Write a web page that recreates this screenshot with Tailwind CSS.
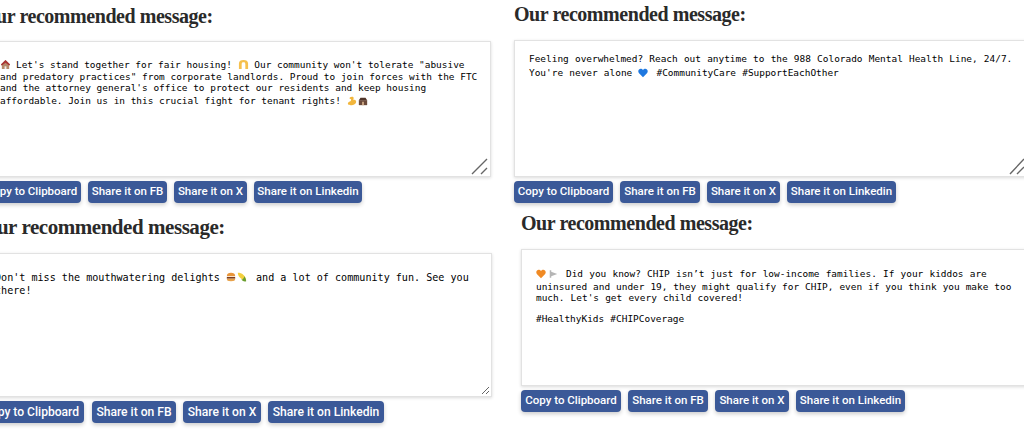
<!DOCTYPE html>
<html lang="en">
<head>
  <meta charset="UTF-8">
  <title>Recommended messages</title>
  <script src="https://cdn.jsdelivr.net/npm/@tailwindcss/browser@4"></script>
</head>
<body class="bg-white overflow-hidden">
  <div class="w-[1024px] h-[434px] overflow-hidden flex">

    <!-- left column -->
    <div class="w-[514px] shrink-0 flex flex-col">
      <section class="ml-[-19px] w-[510px] mt-[3px]">
        <h2 class="font-['Liberation_Serif'] font-bold text-[20px] tracking-[-0.45px] leading-[26px] text-[#2a2a2a]">Our recommended message:</h2>
        <div class="relative mt-[12px] h-[136px] bg-white border border-[#e2e2e2] shadow-[0_1px_3px_rgba(0,0,0,0.15)] pl-[18px] pt-[17px] font-['DejaVu_Sans_Mono'] text-[9.45px] text-black">
          <div class="h-[12px] leading-[12px] whitespace-nowrap"><svg class="inline-block w-[11px] h-[11px] align-[-2px] mr-[5px]" viewBox="0 0 12 12"><path d="M1 6 6 1l5 5-1 1v4H2V7z" fill="#b58a6a"/><path d="M1 6 6 1l5 5-1 1-4-3-4 3z" fill="#a33"/><path d="M5 8h2v3H5z" fill="#eee"/></svg>Let's stand together for fair housing! <svg class="inline-block w-[11px] h-[11px] align-[-2px]" viewBox="0 0 12 12"><path d="M1 11V5c0-3 2-4 5-4s5 1 5 4v6H8V6C8 4 7.500 3.500 6 3.500S4 4 4 6v5z" fill="#f5c04e"/></svg> Our community won't tolerate "abusive</div>
          <div class="h-[11px] leading-[11px] whitespace-nowrap">and predatory practices" from corporate landlords. Proud to join forces with the FTC</div>
          <div class="h-[11px] leading-[11px] whitespace-nowrap">and the attorney general's office to protect our residents and keep housing</div>
          <div class="h-[15px] leading-[15px] whitespace-nowrap">affordable. Join us in this crucial fight for tenant rights! <svg class="inline-block w-[10px] h-[10px] align-[-2px]" viewBox="0 0 12 12"><path d="M6 1C4 1 3 2 3 3l2 1-.5 2C3 6.500 1 8 1 9c0 2 3 2 5 2 3 0 5-2 5-4 0-2-2-3-3.500-2L8 2.500C8 1.500 7 1 6 1z" fill="#f2b63c"/></svg><svg class="inline-block w-[10px] h-[10px] align-[-2px] ml-[1px]" viewBox="0 0 12 12"><path d="M1 5h10v6H1z" fill="#6b4a3a"/><path d="M3 2h6l2 3H1z" fill="#4f3529"/><path d="M5 7h2v4H5z" fill="#d9b48f"/></svg></div>
          <svg class="absolute right-[2px] bottom-[1px] w-[17px] h-[17px]" viewBox="0 0 17 17" fill="none" stroke="#666" stroke-width="1.4"><path d="M1 16 16 1M10 16l6-6"/></svg>
        </div>
        <div class="mt-[4px] ml-[1px] flex gap-[7px]">
          <a class="h-[22px] w-[99px] flex items-center justify-center rounded-[4px] bg-[#3b5998] shadow-[0_2px_4px_rgba(0,0,0,0.2)] font-['Roboto'] font-medium text-[11.5px] text-white">Copy to Clipboard</a>
          <a class="h-[22px] w-[79px] flex items-center justify-center rounded-[4px] bg-[#3b5998] shadow-[0_2px_4px_rgba(0,0,0,0.2)] font-['Roboto'] font-medium text-[11.5px] text-white">Share it on FB</a>
          <a class="h-[22px] w-[73px] flex items-center justify-center rounded-[4px] bg-[#3b5998] shadow-[0_2px_4px_rgba(0,0,0,0.2)] font-['Roboto'] font-medium text-[11.5px] text-white">Share it on X</a>
          <a class="h-[22px] w-[108px] flex items-center justify-center rounded-[4px] bg-[#3b5998] shadow-[0_2px_4px_rgba(0,0,0,0.2)] font-['Roboto'] font-medium text-[11.5px] text-white">Share it on Linkedin</a>
        </div>
      </section>

      <section class="ml-[-22px] w-[514px] mt-[10px]">
        <h2 class="ml-[3px] font-['Liberation_Serif'] font-bold text-[21px] tracking-[-0.45px] leading-[28px] text-[#2a2a2a]">Our recommended message:</h2>
        <div class="relative mt-[12px] h-[144px] bg-white border border-[#e2e2e2] shadow-[0_1px_3px_rgba(0,0,0,0.15)] pl-[16px] pt-[17px] font-['DejaVu_Sans_Mono'] text-[10.1px] text-black">
          <div class="h-[13px] leading-[13px] whitespace-nowrap">Don't miss the mouthwatering delights <svg class="inline-block w-[10px] h-[10px] align-[-1px]" viewBox="0 0 12 12"><path d="M1 5c0-3 2-4 5-4s5 1 5 4z" fill="#e8953a"/><path d="M1 6h10v2H1z" fill="#7a3b1e"/><path d="M1 8h10c0 2-1 3-5 3S1 10 1 8z" fill="#e8a24a"/></svg><svg class="inline-block w-[10px] h-[10px] align-[-1px] ml-[1px] mr-[3px]" viewBox="0 0 12 12"><path d="M1 1c5 0 9 3 10 9-5 0-10-4-10-9z" fill="#f2cf3e"/><path d="M5 9c2 0 3-1 4-4 1 2 2 4 2 6-2 1-4 0-6-2z" fill="#6a9e2f"/></svg> and a lot of community fun. See you</div>
          <div class="h-[13px] leading-[13px] whitespace-nowrap">there!</div>
          <svg class="absolute right-[1px] bottom-[1px] w-[9px] h-[9px]" viewBox="0 0 9 9" fill="none" stroke="#666"><path d="M1 8 8 1M5 8l3-3"/></svg>
        </div>
        <div class="mt-[4px] flex gap-[7px]">
          <a class="h-[22px] w-[106px] mr-[1px] flex items-center justify-center rounded-[4px] bg-[#3b5998] shadow-[0_2px_4px_rgba(0,0,0,0.2)] font-['Roboto'] font-medium text-[12.1px] text-white">Copy to Clipboard</a>
          <a class="h-[22px] w-[84px] flex items-center justify-center rounded-[4px] bg-[#3b5998] shadow-[0_2px_4px_rgba(0,0,0,0.2)] font-['Roboto'] font-medium text-[12.1px] text-white">Share it on FB</a>
          <a class="h-[22px] w-[78px] flex items-center justify-center rounded-[4px] bg-[#3b5998] shadow-[0_2px_4px_rgba(0,0,0,0.2)] font-['Roboto'] font-medium text-[12.1px] text-white">Share it on X</a>
          <a class="h-[22px] w-[116px] flex items-center justify-center rounded-[4px] bg-[#3b5998] shadow-[0_2px_4px_rgba(0,0,0,0.2)] font-['Roboto'] font-medium text-[12.1px] text-white">Share it on Linkedin</a>
        </div>
      </section>
    </div>

    <!-- right column -->
    <div class="flex-1 min-w-0 flex flex-col">
      <section class="w-[530px] mt-[1px]">
        <h2 class="font-['Liberation_Serif'] font-bold text-[20px] tracking-[-0.45px] leading-[26px] text-[#2a2a2a]">Our recommended message:</h2>
        <div class="relative mt-[13px] h-[137px] bg-white border border-[#e2e2e2] shadow-[0_1px_3px_rgba(0,0,0,0.15)] pl-[14px] pt-[11px] font-['DejaVu_Sans_Mono'] text-[9.45px] [word-spacing:0.5px] text-black">
          <div class="h-[13px] leading-[13px] whitespace-nowrap">Feeling overwhelmed? Reach out anytime to the 988 Colorado Mental Health Line, 24/7.</div>
          <div class="h-[15px] leading-[15px] whitespace-nowrap">You're never alone <svg class="inline-block w-[10px] h-[10px] align-[-2px] mr-[8px]" viewBox="0 0 12 12"><path d="M6 11 1 6C-1 3 2 0 4 1c1 .4 2 1.500 2 1.500S7 1.400 8 1c2-1 5 2 3 5z" fill="#1e78e0"/></svg>#CommunityCare #SupportEachOther</div>
          <svg class="absolute right-[19px] bottom-[1px] w-[15px] h-[17px]" viewBox="0 0 15 17" fill="none" stroke="#666" stroke-width="1.4"><path d="M1 16 15 1M8 16l7-7"/></svg>
        </div>
        <div class="mt-[4px] flex gap-[7px]">
          <a class="h-[22px] w-[99px] flex items-center justify-center rounded-[4px] bg-[#3b5998] shadow-[0_2px_4px_rgba(0,0,0,0.2)] font-['Roboto'] font-medium text-[11.5px] text-white">Copy to Clipboard</a>
          <a class="h-[22px] w-[80px] flex items-center justify-center rounded-[4px] bg-[#3b5998] shadow-[0_2px_4px_rgba(0,0,0,0.2)] font-['Roboto'] font-medium text-[11.5px] text-white">Share it on FB</a>
          <a class="h-[22px] w-[73px] flex items-center justify-center rounded-[4px] bg-[#3b5998] shadow-[0_2px_4px_rgba(0,0,0,0.2)] font-['Roboto'] font-medium text-[11.5px] text-white">Share it on X</a>
          <a class="h-[22px] w-[109px] flex items-center justify-center rounded-[4px] bg-[#3b5998] shadow-[0_2px_4px_rgba(0,0,0,0.2)] font-['Roboto'] font-medium text-[11.5px] text-white">Share it on Linkedin</a>
        </div>
      </section>

      <section class="ml-[7px] w-[530px] mt-[7px]">
        <h2 class="font-['Liberation_Serif'] font-bold text-[20px] tracking-[-0.45px] leading-[26px] text-[#2a2a2a]">Our recommended message:</h2>
        <div class="mt-[13px] h-[137px] bg-white border border-[#e2e2e2] shadow-[0_1px_3px_rgba(0,0,0,0.15)] pl-[14px] pt-[17px] font-['DejaVu_Sans_Mono'] text-[9.45px] [word-spacing:0.5px] text-black">
          <div class="h-[14px] leading-[13px] whitespace-nowrap"><svg class="inline-block w-[10px] h-[10px] align-[-2px]" viewBox="0 0 12 12"><path d="M6 11 1 6C-1 3 2 0 4 1c1 .4 2 1.500 2 1.500S7 1.400 8 1c2-1 5 2 3 5z" fill="#f08a24"/></svg><svg class="inline-block w-[9px] h-[10px] align-[-2px] ml-[3px] mr-[8px]" viewBox="0 0 12 12"><path d="M1 1h2v10H1zM3 3l8 3-8 3z" fill="#b5b5b5"/></svg>Did you know? CHIP isn’t just for low-income families. If your kiddos are</div>
          <div class="h-[11px] leading-[11px] whitespace-nowrap [word-spacing:0.25px]">uninsured and under 19, they might qualify for CHIP, even if you think you make too</div>
          <div class="h-[11px] leading-[11px] whitespace-nowrap">much. Let's get every child covered!</div>
          <div class="h-[10px]"></div>
          <div class="h-[11px] leading-[11px] whitespace-nowrap">#HealthyKids #CHIPCoverage</div>
        </div>
        <div class="mt-[4px] flex gap-[7px]">
          <a class="h-[22px] w-[100px] flex items-center justify-center rounded-[4px] bg-[#3b5998] shadow-[0_2px_4px_rgba(0,0,0,0.2)] font-['Roboto'] font-medium text-[11.5px] text-white">Copy to Clipboard</a>
          <a class="h-[22px] w-[80px] flex items-center justify-center rounded-[4px] bg-[#3b5998] shadow-[0_2px_4px_rgba(0,0,0,0.2)] font-['Roboto'] font-medium text-[11.5px] text-white">Share it on FB</a>
          <a class="h-[22px] w-[74px] flex items-center justify-center rounded-[4px] bg-[#3b5998] shadow-[0_2px_4px_rgba(0,0,0,0.2)] font-['Roboto'] font-medium text-[11.5px] text-white">Share it on X</a>
          <a class="h-[22px] w-[109px] flex items-center justify-center rounded-[4px] bg-[#3b5998] shadow-[0_2px_4px_rgba(0,0,0,0.2)] font-['Roboto'] font-medium text-[11.5px] text-white">Share it on Linkedin</a>
        </div>
      </section>
    </div>
  </div>
</body>
</html>
